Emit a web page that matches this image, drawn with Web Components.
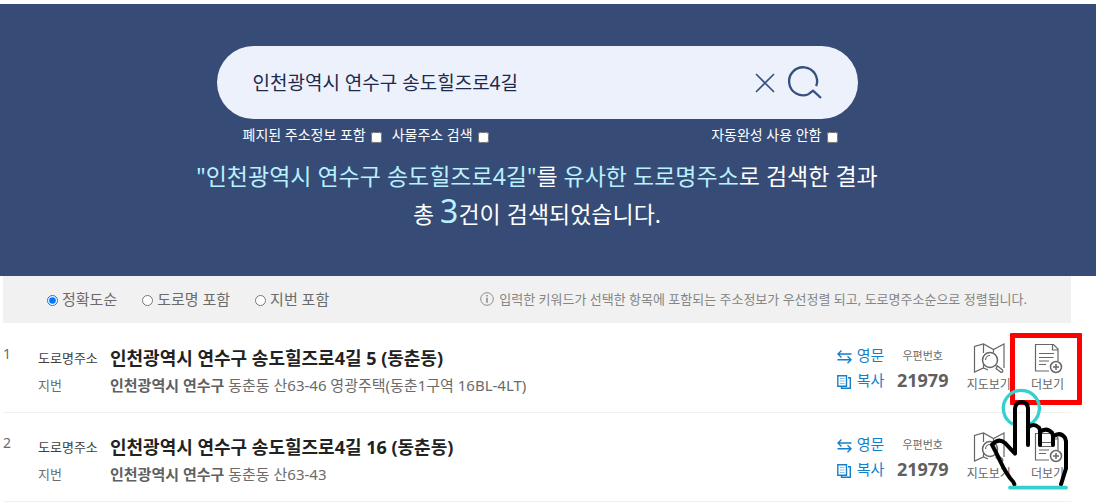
<!DOCTYPE html>
<html lang="ko">
<head>
<meta charset="utf-8">
<meta name="viewport" content="width=device-width, initial-scale=1">
<title>도로명주소 검색 결과</title>
<style>
  body {
    margin: 0;
    background: #fff;
    color: #6b6b6b;
    font-family: "Noto Sans", "Noto Sans CJK KR", sans-serif;
    font-size: 14px;
  }
  b { color: #606060; font-weight: 600; }
</style>
</head>
<body>
<address-page>
  <search-header slot="header"></search-header>
  <sort-bar></sort-bar>
  <result-list>
    <address-row number="1" zip="21979">
      <span slot="road">인천광역시 연수구 송도힐즈로4길 5 (동춘동)</span>
      <span slot="lot"><b>인천광역시 연수구</b> 동춘동 산63-46 영광주택(동춘1구역 16BL-4LT)</span>
    </address-row>
    <address-row number="2" zip="21979">
      <span slot="road">인천광역시 연수구 송도힐즈로4길 16 (동춘동)</span>
      <span slot="lot"><b>인천광역시 연수구</b> 동춘동 산63-43</span>
    </address-row>
    <click-guide slot="guide"></click-guide>
  </result-list>
</address-page>

<template id="address-page">
  <style>
    :host { display: block; padding-top: 4px; }
    main { padding: 0 25px 0 3px; }
  </style>
  <slot name="header"></slot>
  <main><slot></slot></main>
</template>

<template id="search-header">
  <style>
    :host {
      display: block;
      padding: 42px 25px 43px 3px;
      background: #364b75;
      color: #fff;
    }
    form { max-width: 641px; margin: 0 auto; }
    .options {
      display: flex;
      gap: 10px;
      padding: 4px 20px 0 26px;
      font-size: 14px;
      line-height: 24px;
    }
    .options label { display: flex; align-items: center; gap: 5px; }
    .options label:last-child { margin-left: auto; }
    .options input { width: 11px; height: 11px; margin: 4px 0 0; }
    .summary {
      margin: 10px 0 0;
      font-size: 23px;
      line-height: 38px;
      text-align: center;
    }
    em { color: #b8f1ff; font-style: normal; }
    .count { font-size: 32px; line-height: 1; }
  </style>
  <form role="search">
    <search-box></search-box>
    <div class="options">
      <label>폐지된 주소정보 포함 <input type="checkbox"></label>
      <label>사물주소 검색 <input type="checkbox"></label>
      <label>자동완성 사용 안함 <input type="checkbox"></label>
    </div>
  </form>
  <p class="summary"><em>"인천광역시 연수구 송도힐즈로4길"</em>를 <em>유사한 도로명주소</em>로 검색한 결과<br>총 <em class="count">3</em>건이 검색되었습니다.</p>
</template>

<template id="search-box">
  <style>
    :host {
      display: flex;
      align-items: center;
      height: 73px;
      padding: 0 35px 0 36px;
      border-radius: 37px;
      background: #ecf1fc;
    }
    input {
      flex: 1;
      min-width: 0;
      padding: 0;
      border: 0;
      outline: 0;
      background: none;
      color: #1c2b4c;
      font: inherit;
      font-size: 19px;
      line-height: 28px;
    }
    button { display: flex; padding: 0; border: 0; background: none; }
    .clear { margin-right: 12px; }
    svg { fill: none; stroke: #36507f; }
  </style>
  <input type="text" aria-label="주소 검색" value="인천광역시 연수구 송도힐즈로4길">
  <button class="clear" type="button" aria-label="지우기">
    <svg width="20" height="20" viewBox="0 0 20 20" stroke-width="1.6"><path d="M1 1l18 18M19 1L1 19"/></svg>
  </button>
  <button type="button" aria-label="검색">
    <svg width="36" height="36" viewBox="0 0 36 36" stroke-width="2.3"><path d="M29.2 21.2A14 14 0 1 0 21.5 29.2M21.5 29.2L26 25.6L34 33" stroke-linejoin="round"/></svg>
  </button>
</template>

<template id="sort-bar">
  <style>
    :host {
      display: flex;
      align-items: center;
      justify-content: space-between;
      box-sizing: border-box;
      min-height: 47px;
      padding: 0 44px 2px 44px;
      background: #f1f1f1;
    }
    fieldset {
      display: flex;
      gap: 25px;
      margin: 0;
      padding: 0;
      border: 0;
      font-size: 15px;
      line-height: 22px;
    }
    label { display: flex; align-items: center; gap: 4px; }
    input { width: 11px; height: 11px; margin: 4px 0 0; }
    p {
      display: flex;
      align-items: center;
      gap: 5px;
      margin: 0;
      color: #858585;
      font-size: 13px;
      line-height: 20px;
    }
    svg { fill: none; stroke: #8c8c8c; }
  </style>
  <fieldset aria-label="정렬">
    <label><input type="radio" name="sort" checked>정확도순</label>
    <label><input type="radio" name="sort">도로명 포함</label>
    <label><input type="radio" name="sort">지번 포함</label>
  </fieldset>
  <p><svg width="14" height="14" viewBox="0 0 14 14"><circle cx="7" cy="7" r="6.3"/><path d="M7 5.8v5M7 3v1.6" stroke-width="1.6"/></svg>입력한 키워드가 선택한 항목에 포함되는 주소정보가 우선정렬 되고, 도로명주소순으로 정렬됩니다.</p>
</template>

<template id="result-list">
  <style>
    :host { display: block; position: relative; padding-top: 1px; }
  </style>
  <slot></slot>
  <slot name="guide"></slot>
</template>

<template id="address-row">
  <style>
    :host {
      display: flex;
      box-sizing: border-box;
      min-height: 89px;
      padding: 19px 7px 12px 0;
      border-bottom: 1px solid #f1f1f1;
    }
    .number { width: 35px; line-height: 22px; }
    dl {
      flex: 1;
      display: grid;
      grid-template-columns: 72px 1fr;
      grid-template-rows: 28px 26px;
      align-items: center;
      margin: 0;
      font-size: 15px;
    }
    dt { font-size: 13px; }
    dd { margin: 0; }
    .road { color: #404040; }
    dd.road { color: #222; font-size: 18px; font-weight: 700; }
    .links, .zip { line-height: 25px; }
    .links { width: 60px; font-size: 15px; }
    a { color: #1480cc; text-decoration: none; }
    .links a { display: flex; align-items: center; gap: 5px; }
    .links svg { margin-top: 2px; stroke: #1480cc; }
    .zip { width: 52px; text-align: center; font-size: 11px; }
    .zip b { display: block; color: #606060; font-size: 18px; font-weight: 700; }
    .actions { display: flex; gap: 20px; margin-left: 18px; }
    .actions a {
      display: flex;
      flex-direction: column;
      align-items: center;
      color: #666;
      font-size: 12px;
      line-height: 20px;
    }
    svg { display: block; fill: none; stroke: #666; }
  </style>
  <span class="number"></span>
  <dl>
    <dt class="road">도로명주소</dt><dd class="road"><slot name="road"></slot></dd>
    <dt>지번</dt><dd><slot name="lot"></slot></dd>
  </dl>
  <div class="links">
    <a href="#english"><svg width="15" height="14" viewBox="0 0 15 14" stroke-width="1.4"><path d="M14.500 4H1M4.500.5L1 4l3.500 3.500M.5 9.800H14M10.500 6.300L14 9.800l-3.500 3.500"/></svg>영문</a>
    <a href="#copy"><svg width="15" height="14" viewBox="0 0 15 14" stroke-width="1.4"><path d="M.8.8h8.700v10.400H.8zM11 2.800h2.300v10.400H4.500v-1.500"/><path d="M2.800 3.500h4.700M2.800 6h4.700M2.800 8.500h4.700" stroke-width=".7" opacity=".7"/></svg>복사</a>
  </div>
  <div class="zip">우편번호<b></b></div>
  <div class="actions">
    <a href="#map">
      <svg width="32" height="32" viewBox="0 0 32 32" stroke-width="1.2"><path d="M15 27l-4.500-2L1.500 29V3.500L10.500 1l10 5.500L31 1v24M10.500 1v9M10.500 21v4M20.500 6.500v3"/><circle cx="17" cy="17" r="7.500" stroke-width="1.500"/><path d="M12.500 17a4.500 4.500 0 0 1 4.500-4.500M22.500 22.500l1.500 1M23 25.500l1.500-2.500 5 4q1.200 2-1.300 2.500z"/></svg>지도보기
    </a>
    <a href="#more">
      <svg width="32" height="32" viewBox="0 0 32 32" stroke-width="1.2"><path d="M18 28H4.500V1.500h18L27 6V18M21.500 1.500V7H27M8 10.500h15M8 14.500h14.500M8 18h10M8 21.500h7"/><circle cx="25" cy="24" r="5.500" stroke-width="1.500"/><path d="M25 21v6M22 24h6" stroke-width="1.500"/></svg>더보기
    </a>
  </div>
</template>

<template id="click-guide">
  <style>
    :host { display: block; pointer-events: none; }
    .frame {
      position: absolute;
      top: 10px;
      right: -11px;
      box-sizing: border-box;
      width: 72px;
      height: 72px;
      border: 5px solid #f00;
      border-radius: 1px;
    }
    svg { position: absolute; top: 64px; right: 1px; fill: none; stroke: #000; }
  </style>
  <div class="frame"></div>
  <svg width="82" height="104" viewBox="84 6 246 312" stroke-width="12" stroke-linejoin="round" stroke-linecap="round">
    <path d="M159 118A54 54 0 1 1 209 118" stroke="#35cfd0" stroke-width="10" stroke-linecap="butt"/>
    <path d="M163 298L160 291C128 257 127 235 96 179Q116 158 134 173L165 206V70Q168 51 184 51Q202 51 204 70V180M204 128Q220 112 237 128L240 136V180M240 140Q260 126 276 143L279 152V180M279 155Q300 139 315 158L318 169V250L303 298"/>
    <path d="M150 308H318" stroke="#35cfd0" stroke-width="11"/>
  </svg>
</template>

<script>
  class TemplateElement extends HTMLElement {
    constructor() {
      super();
      const template = document.getElementById(this.localName);
      this.attachShadow({ mode: "open" }).append(template.content.cloneNode(true));
    }
  }

  class AddressRow extends TemplateElement {
    connectedCallback() {
      this.shadowRoot.querySelector(".number").textContent = this.getAttribute("number");
      this.shadowRoot.querySelector(".zip b").textContent = this.getAttribute("zip");
    }
  }

  customElements.define("search-box", class extends TemplateElement {
    connectedCallback() {
      const input = this.shadowRoot.querySelector("input");
      this.shadowRoot.querySelector(".clear").onclick = () => {
        input.value = "";
        input.focus();
      };
    }
  });
  customElements.define("address-row", AddressRow);
  for (const name of ["address-page", "search-header", "sort-bar", "result-list", "click-guide"]) {
    customElements.define(name, class extends TemplateElement {});
  }
</script>
</body>
</html>
